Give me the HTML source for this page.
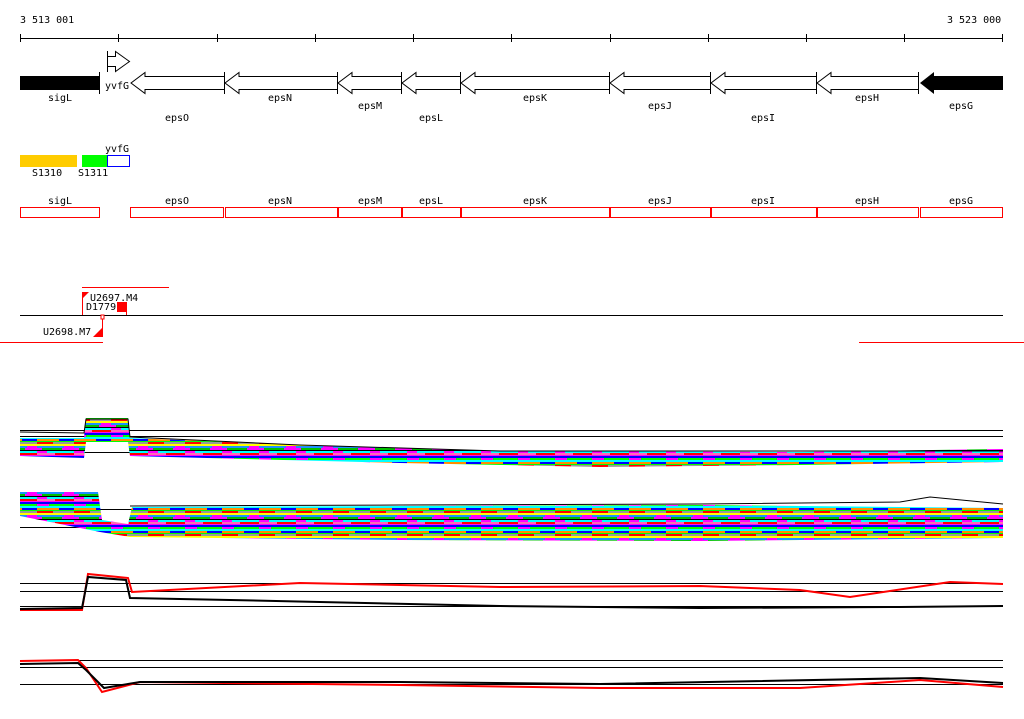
<!DOCTYPE html>
<html><head><meta charset="utf-8"><style>
body{margin:0;background:#fff;width:1024px;height:714px;overflow:hidden}
svg text{font-family:"DejaVu Sans Mono","Liberation Mono",monospace;font-size:10px;fill:#000}
</style></head><body>
<svg width="1024" height="714" xmlns="http://www.w3.org/2000/svg">
<defs>
<pattern id="st" width="37" height="23" patternUnits="userSpaceOnUse">
<rect width="37" height="23" fill="#ff00ff"/>
<rect y="0" width="37" height="2" fill="#00ffff"/>
<rect y="2" width="22" height="2" fill="#ff8c00"/>
<rect x="22" y="2" width="15" height="2" fill="#0000ff"/>
<rect y="4" width="37" height="1" fill="#00ff00"/>
<rect y="5" width="16" height="2" fill="#ff0000"/>
<rect x="16" y="5" width="21" height="2" fill="#999"/>
<rect y="7" width="37" height="2" fill="#ffff00"/>
<rect y="9" width="27" height="2" fill="#1e90ff"/>
<rect x="5" y="11" width="20" height="2" fill="#00c000"/>
<rect y="13" width="37" height="1" fill="#000"/>
<rect x="10" y="14" width="27" height="2" fill="#00ffff"/>
<rect y="16" width="18" height="2" fill="#ff69b4"/>
<rect x="18" y="16" width="19" height="2" fill="#ff0000"/>
<rect y="19" width="37" height="2" fill="#0000ff"/>
<rect x="12" y="21" width="25" height="2" fill="#00ff00"/>
</pattern>
</defs>
<text x="20" y="23">3 513 001</text>
<text x="947" y="23">3 523 000</text>
<g stroke="#000" stroke-width="1" fill="none">
<path d="M20 38.5H1003"/>
<path d="M20.5 34v8M118.5 34v8M217.5 34v8M315.5 34v8M413.5 34v8M511.5 34v8M610.5 34v8M708.5 34v8M806.5 34v8M904.5 34v8M1002.5 34v8"/>
</g>
<rect x="20" y="76" width="79" height="14" fill="#000"/>
<path d="M99.5 72v22" stroke="#000"/>
<path d="M107.5 51v21M107.5 56.5h8v-5l14 10-14 10v-5h-8" stroke="#000" fill="#fff"/>
<g fill="#fff" stroke="#000">
<path d="M224.5 76.5H145v-4l-14 10.5 14 10.5v-4h79.5z"/>
<path d="M337.5 76.5H239v-4l-14 10.5 14 10.5v-4h98.5z"/>
<path d="M401.5 76.5H352v-4l-14 10.5 14 10.5v-4h49.5z"/>
<path d="M460.5 76.5H416v-4l-14 10.5 14 10.5v-4h44.5z"/>
<path d="M609.5 76.5H475v-4l-14 10.5 14 10.5v-4h134.5z"/>
<path d="M710.5 76.5H624v-4l-14 10.5 14 10.5v-4h86.5z"/>
<path d="M816.5 76.5H725v-4l-14 10.5 14 10.5v-4h91.5z"/>
<path d="M918.5 76.5H831v-4l-14 10.5 14 10.5v-4h87.5z"/>
</g>
<path d="M1003 76H934v-4l-14 11 14 11v-4h69z" fill="#000"/>
<path d="M224.5 72v22M337.5 72v22M401.5 72v22M460.5 72v22M609.5 72v22M710.5 72v22M816.5 72v22M918.5 72v22" stroke="#000"/>
<text x="48" y="101">sigL</text>
<text x="105" y="89">yvfG</text>
<text x="165" y="121">epsO</text>
<text x="268" y="101">epsN</text>
<text x="358" y="109">epsM</text>
<text x="419" y="121">epsL</text>
<text x="523" y="101">epsK</text>
<text x="648" y="109">epsJ</text>
<text x="751" y="121">epsI</text>
<text x="855" y="101">epsH</text>
<text x="949" y="109">epsG</text>
<rect x="20" y="155" width="57" height="12" fill="#ffcc00"/>
<rect x="82" y="155" width="25" height="12" fill="#00ff00"/>
<rect x="107.5" y="155.5" width="22" height="11" fill="#fff" stroke="#0000ff"/>
<text x="105" y="152">yvfG</text>
<text x="32" y="176">S1310</text>
<text x="78" y="176">S1311</text>
<g fill="#fff" stroke="#ff0000">
<rect x="20.5" y="207.5" width="79" height="10"/>
<rect x="130.5" y="207.5" width="93" height="10"/>
<rect x="225.5" y="207.5" width="112" height="10"/>
<rect x="338.5" y="207.5" width="63" height="10"/>
<rect x="402.5" y="207.5" width="58" height="10"/>
<rect x="461.5" y="207.5" width="148" height="10"/>
<rect x="610.5" y="207.5" width="100" height="10"/>
<rect x="711.5" y="207.5" width="105" height="10"/>
<rect x="817.5" y="207.5" width="101" height="10"/>
<rect x="920.5" y="207.5" width="82" height="10"/>
</g>
<text x="48" y="204">sigL</text><text x="165" y="204">epsO</text><text x="268" y="204">epsN</text>
<text x="358" y="204">epsM</text><text x="419" y="204">epsL</text><text x="523" y="204">epsK</text>
<text x="648" y="204">epsJ</text><text x="751" y="204">epsI</text><text x="855" y="204">epsH</text><text x="949" y="204">epsG</text>
<path d="M82 287.5H169M0 342.5H103M859 342.5H1024" stroke="#ff0000"/>
<path d="M20 315.5H1003" stroke="#000"/>
<path d="M82.5 292v23M126.5 302v13M102.5 316v21" stroke="#ff0000"/>
<path d="M82 292h7l-7 7z" fill="#f00"/>
<rect x="117" y="302" width="9" height="10" fill="#f00"/>
<path d="M102 328v9h-9z" fill="#f00"/>
<rect x="101" y="315" width="3" height="4" fill="#fff" stroke="#f00"/>
<text x="90" y="301">U2697.M4</text>
<text x="86" y="310">D1779</text>
<text x="43" y="335">U2698.M7</text>
<g stroke="#000">
<path d="M20 430.5H1003M20 436.5H1003M20 452.5H1003"/>
<path d="M20 509.5H1003M20 527.5H1003"/>
<path d="M20 583.5H1003M20 591.5H1003M20 606.5H1003"/>
<path d="M20 660.5H1003M20 667.5H1003M20 684.5H1003"/>
</g>
<path d="M20 438L84 438 86 418 128 418 130 438 300 445 500 451 800 452 1003 449 1003 462 800 465 600 467 400 463 130 456 128 442 86 442 84 458 20 456z" fill="url(#st)"/>
<path d="M20 492L98 492 102 520 128 524 132 507 400 506 700 505 1003 508 1003 538 700 541 400 540 130 537 100 532 20 516z" fill="url(#st)"/>
<path d="M20 432L84 433 86 419 128 419 130 437 300 445 500 451 1003 451" stroke="#000" fill="none"/>
<path d="M130 506L400 505 700 504 900 502 930 497 1003 504" stroke="#000" fill="none"/>
<path d="M20 610L82 610 88 574 128 578 132 592 300 583 500 587 700 586 800 590 850 597 950 582 1003 584" stroke="#f00" fill="none" stroke-width="2"/>
<path d="M20 609L82 608 88 577 126 580 130 598 230 600 320 602 500 606 700 608 900 607 1003 606" stroke="#000" fill="none" stroke-width="2"/>
<path d="M20 661L78 660 86 668 102 692 140 682 400 685 600 688 800 688 920 680 1003 687" stroke="#f00" fill="none" stroke-width="2"/>
<path d="M20 664L78 663 86 670 104 688 140 682 400 682 600 684 920 678 1003 683" stroke="#000" fill="none" stroke-width="2"/>
</svg>
</body></html>
